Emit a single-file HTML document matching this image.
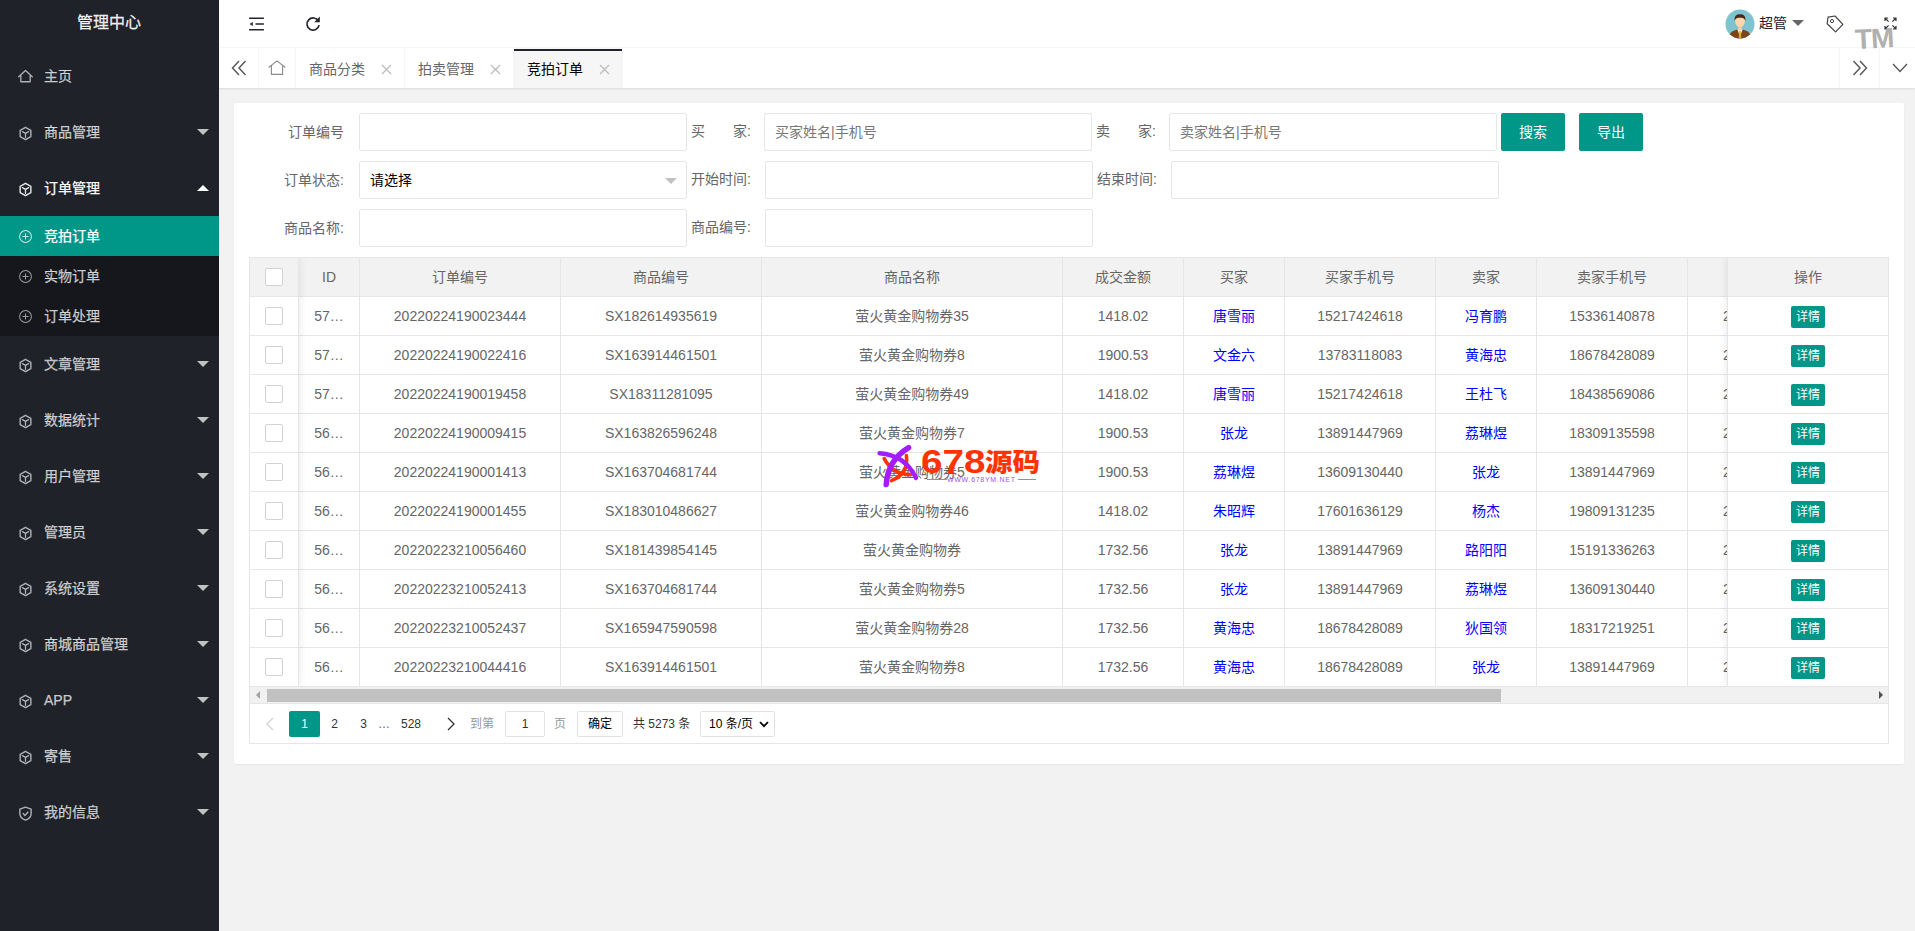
<!DOCTYPE html>
<html lang="zh-CN"><head><meta charset="utf-8"><title>管理中心</title>
<style>
*{box-sizing:border-box;margin:0;padding:0}
html,body{width:1915px;height:931px;overflow:hidden}
body{background:#f2f2f2;font-family:"Liberation Sans","Noto Sans CJK SC",sans-serif;font-size:14px;color:#666;position:relative}
.abs{position:absolute}
#side{position:absolute;left:0;top:0;width:219px;height:931px;background:#20222a;color:rgba(255,255,255,.72)}
#logo{position:absolute;left:0;top:0;width:218px;height:48px;line-height:45px;text-align:center;font-size:16px;color:rgba(255,255,255,.92);-webkit-text-stroke:.3px rgba(255,255,255,.9)}
.mi{position:absolute;left:0;width:219px;height:56px;line-height:56px}
.mi .ic{position:absolute;left:18px;top:21.5px;width:15px;height:15px;opacity:.9}
.mi span{position:absolute;left:44px;top:0;-webkit-text-stroke:.25px currentColor}
.mi.on{color:#fff}
.arr{position:absolute;left:197px;width:0;height:0;border:6px solid transparent}
.arr.down{top:25px;border-top-color:rgba(255,255,255,.72);border-bottom-width:0}
.arr.up{top:25px;border-bottom-color:#fff;border-top-width:0}
#sub{position:absolute;left:0;top:216px;width:219px;height:120px;background:#16171d}
.si{position:absolute;left:0;width:219px;height:40px;line-height:40px}
.si .ic{position:absolute;left:18px;top:13px;width:15px;height:15px;opacity:.8}
.si span{position:absolute;left:44px;-webkit-text-stroke:.25px currentColor}
.si.on{background:#009688;color:#fff}
#head{position:absolute;left:219px;top:0;width:1696px;height:48px;background:#fff;border-bottom:1px solid #f6f6f6}
#tabs{position:absolute;left:219px;top:48px;width:1696px;height:40px;background:#fff;box-shadow:0 1px 2px 0 rgba(0,0,0,.1)}
.tb{position:absolute;top:0;height:40px;border-right:1px solid #f6f6f6;line-height:40px;color:#666}
.tb.l{border-right:0;border-left:1px solid #f6f6f6}
.tab span{position:absolute;left:13px;top:1px;white-space:nowrap}
.tab.on{background:#f6f6f6;color:#000}
.tab.on:before{content:"";position:absolute;left:0;top:1px;width:108px;height:2px;background:#20222a}
.x{position:absolute;left:85px;top:16px;width:11px;height:11px}
#card{position:absolute;left:234px;top:103px;width:1670px;height:661px;background:#fff;border-radius:2px;box-shadow:0 1px 2px 0 rgba(0,0,0,.05)}
.lb{position:absolute;height:38px;line-height:38px;white-space:nowrap;color:#666}
.inp{position:absolute;height:38px;width:328px;border:1px solid #e6e6e6;border-radius:2px;background:#fff;line-height:36px;padding-left:10px;color:#777;white-space:nowrap}
.btn{position:absolute;top:113px;height:38px;width:64px;background:#009688;color:#fff;text-align:center;line-height:38px;border-radius:2px}
#tbl{position:absolute;left:249px;top:257px;width:1640px;height:487px;border:1px solid #e6e6e6;background:#fff;overflow:hidden}
.hr{position:absolute;left:0;top:0;height:39px;width:1640px;background:#f2f2f2;border-bottom:1px solid #e6e6e6}
.c{position:absolute;top:0;height:39px;line-height:38px;text-align:center;border-right:1px solid #e6e6e6;border-bottom:1px solid #e6e6e6;white-space:nowrap;overflow:hidden}
.r{position:absolute;left:0;width:1640px;height:39px}
.r .c{background:#fff}
.hr .c{background:#f2f2f2}
a{color:#00f;text-decoration:none}
.cb{position:absolute;left:15px;top:10px;width:18px;height:18px;border:1px solid #d2d2d2;border-radius:2px;background:#fff}
.det{display:inline-block;height:22px;line-height:22px;padding:0 5px;background:#009688;color:#fff;font-size:12px;border-radius:2px;vertical-align:middle;margin-top:0px}
#fl{position:absolute;left:0;top:0;width:49px;height:429px;box-shadow:1px 0 8px rgba(0,0,0,.08);border-right:1px solid #e6e6e6}
#fr{position:absolute;left:1477px;top:0;width:162px;height:429px;box-shadow:-1px 0 8px rgba(0,0,0,.08);border-left:1px solid #e6e6e6;background:#fff}
#sb{position:absolute;left:0;top:429px;width:1638px;height:16px;background:#f1f1f1}
#pg{position:absolute;left:0;top:445px;width:1638px;height:41px;border-top:1px solid #e6e6e6;font-size:12px;color:#333}
.p{position:absolute;top:7px;height:26px;line-height:26px;text-align:center;white-space:nowrap}
</style></head><body>

<div id="side"><div id="logo">管理中心</div>
<div class="mi" style="top:48px"><svg class="ic" style="top:20.5px" viewBox="0 0 16 16"><path d="M0.8 8.3 L8 1.6 L15.2 8.3 M3 6.8 V13.6 H13 V6.8" fill="none" stroke="currentColor" stroke-width="1.4" stroke-linejoin="round" stroke-linecap="round"/></svg><span>主页</span></div>
<div class="mi" style="top:104px"><svg class="ic" viewBox="0 0 16 16"><path d="M8 1.4 L13.7 4.7 V11.3 L8 14.6 L2.3 11.3 V4.7 Z" fill="none" stroke="currentColor" stroke-width="1.5" stroke-linejoin="round"/><path d="M4.7 6 L8 7.9 L11.3 6 M8 7.9 V12" fill="none" stroke="currentColor" stroke-width="1.4" stroke-linecap="round"/></svg><span>商品管理</span><i class="arr down"></i></div>
<div class="mi on" style="top:160px"><svg class="ic" viewBox="0 0 16 16"><path d="M8 1.4 L13.7 4.7 V11.3 L8 14.6 L2.3 11.3 V4.7 Z" fill="none" stroke="currentColor" stroke-width="1.5" stroke-linejoin="round"/><path d="M4.7 6 L8 7.9 L11.3 6 M8 7.9 V12" fill="none" stroke="currentColor" stroke-width="1.4" stroke-linecap="round"/></svg><span>订单管理</span><i class="arr up"></i></div>
<div class="mi" style="top:336px"><svg class="ic" viewBox="0 0 16 16"><path d="M8 1.4 L13.7 4.7 V11.3 L8 14.6 L2.3 11.3 V4.7 Z" fill="none" stroke="currentColor" stroke-width="1.5" stroke-linejoin="round"/><path d="M4.7 6 L8 7.9 L11.3 6 M8 7.9 V12" fill="none" stroke="currentColor" stroke-width="1.4" stroke-linecap="round"/></svg><span>文章管理</span><i class="arr down"></i></div>
<div class="mi" style="top:392px"><svg class="ic" viewBox="0 0 16 16"><path d="M8 1.4 L13.7 4.7 V11.3 L8 14.6 L2.3 11.3 V4.7 Z" fill="none" stroke="currentColor" stroke-width="1.5" stroke-linejoin="round"/><path d="M4.7 6 L8 7.9 L11.3 6 M8 7.9 V12" fill="none" stroke="currentColor" stroke-width="1.4" stroke-linecap="round"/></svg><span>数据统计</span><i class="arr down"></i></div>
<div class="mi" style="top:448px"><svg class="ic" viewBox="0 0 16 16"><path d="M8 1.4 L13.7 4.7 V11.3 L8 14.6 L2.3 11.3 V4.7 Z" fill="none" stroke="currentColor" stroke-width="1.5" stroke-linejoin="round"/><path d="M4.7 6 L8 7.9 L11.3 6 M8 7.9 V12" fill="none" stroke="currentColor" stroke-width="1.4" stroke-linecap="round"/></svg><span>用户管理</span><i class="arr down"></i></div>
<div class="mi" style="top:504px"><svg class="ic" viewBox="0 0 16 16"><path d="M8 1.4 L13.7 4.7 V11.3 L8 14.6 L2.3 11.3 V4.7 Z" fill="none" stroke="currentColor" stroke-width="1.5" stroke-linejoin="round"/><path d="M4.7 6 L8 7.9 L11.3 6 M8 7.9 V12" fill="none" stroke="currentColor" stroke-width="1.4" stroke-linecap="round"/></svg><span>管理员</span><i class="arr down"></i></div>
<div class="mi" style="top:560px"><svg class="ic" viewBox="0 0 16 16"><path d="M8 1.4 L13.7 4.7 V11.3 L8 14.6 L2.3 11.3 V4.7 Z" fill="none" stroke="currentColor" stroke-width="1.5" stroke-linejoin="round"/><path d="M4.7 6 L8 7.9 L11.3 6 M8 7.9 V12" fill="none" stroke="currentColor" stroke-width="1.4" stroke-linecap="round"/></svg><span>系统设置</span><i class="arr down"></i></div>
<div class="mi" style="top:616px"><svg class="ic" viewBox="0 0 16 16"><path d="M8 1.4 L13.7 4.7 V11.3 L8 14.6 L2.3 11.3 V4.7 Z" fill="none" stroke="currentColor" stroke-width="1.5" stroke-linejoin="round"/><path d="M4.7 6 L8 7.9 L11.3 6 M8 7.9 V12" fill="none" stroke="currentColor" stroke-width="1.4" stroke-linecap="round"/></svg><span>商城商品管理</span><i class="arr down"></i></div>
<div class="mi" style="top:672px"><svg class="ic" viewBox="0 0 16 16"><path d="M8 1.4 L13.7 4.7 V11.3 L8 14.6 L2.3 11.3 V4.7 Z" fill="none" stroke="currentColor" stroke-width="1.5" stroke-linejoin="round"/><path d="M4.7 6 L8 7.9 L11.3 6 M8 7.9 V12" fill="none" stroke="currentColor" stroke-width="1.4" stroke-linecap="round"/></svg><span>APP</span><i class="arr down"></i></div>
<div class="mi" style="top:728px"><svg class="ic" viewBox="0 0 16 16"><path d="M8 1.4 L13.7 4.7 V11.3 L8 14.6 L2.3 11.3 V4.7 Z" fill="none" stroke="currentColor" stroke-width="1.5" stroke-linejoin="round"/><path d="M4.7 6 L8 7.9 L11.3 6 M8 7.9 V12" fill="none" stroke="currentColor" stroke-width="1.4" stroke-linecap="round"/></svg><span>寄售</span><i class="arr down"></i></div>
<div class="mi" style="top:784px"><svg class="ic" viewBox="0 0 16 16"><path d="M8 1.2 L14 3.3 V8.2 C14 11.6 11.2 13.8 8 15 C4.8 13.8 2 11.6 2 8.2 V3.3 Z" fill="none" stroke="currentColor" stroke-width="1.5" stroke-linejoin="round"/><path d="M5.2 7.8 L7.4 10 L11 6.2" fill="none" stroke="currentColor" stroke-width="1.5"/></svg><span>我的信息</span><i class="arr down"></i></div>
<div id="sub">
<div class="si on" style="top:0px"><svg class="ic" viewBox="0 0 16 16"><circle cx="8" cy="8" r="6.3" fill="none" stroke="currentColor" stroke-width="1.1"/><path d="M8 4.8 V11.2 M4.8 8 H11.2" stroke="currentColor" stroke-width="1.1" fill="none"/></svg><span>竞拍订单</span></div>
<div class="si" style="top:40px"><svg class="ic" viewBox="0 0 16 16"><circle cx="8" cy="8" r="6.3" fill="none" stroke="currentColor" stroke-width="1.1"/><path d="M8 4.8 V11.2 M4.8 8 H11.2" stroke="currentColor" stroke-width="1.1" fill="none"/></svg><span>实物订单</span></div>
<div class="si" style="top:80px"><svg class="ic" viewBox="0 0 16 16"><circle cx="8" cy="8" r="6.3" fill="none" stroke="currentColor" stroke-width="1.1"/><path d="M8 4.8 V11.2 M4.8 8 H11.2" stroke="currentColor" stroke-width="1.1" fill="none"/></svg><span>订单处理</span></div>
</div></div>
<div id="head">
<svg class="abs" style="left:29px;top:16px;width:17px;height:16px" viewBox="0 0 17 16"><path d="M1.6 2.3 H15.4 M8 8 H15.4 M1.6 13.7 H15.4" stroke="#23242c" stroke-width="1.4" stroke-linecap="round" fill="none"/><path d="M1.6 8 L4.8 6 V10 Z" fill="#23242c"/></svg>
<svg class="abs" style="left:85px;top:15px;width:18px;height:18px" viewBox="0 0 18 18"><path d="M14.4 6.0 A6.1 6.1 0 1 0 15.1 10.2" stroke="#23242c" stroke-width="1.7" fill="none"/><path d="M10.2 7.2 H15.8 V1.6 Z" fill="#23242c"/></svg>
<svg class="abs" style="left:1506px;top:9px;width:30px;height:30px" viewBox="0 0 30 30"><defs><clipPath id="av"><circle cx="15" cy="15" r="14.5"/></clipPath></defs><circle cx="15" cy="15" r="14.5" fill="#7ec3cf"/><g clip-path="url(#av)"><path d="M3 30 C4 23 9 21.5 12 20.5 L15 24 L18 20.5 C21 21.5 26 23 27 30 Z" fill="#7a4518"/><path d="M12.6 20 L15 29 L17.4 20 Z" fill="#fff"/><path d="M14.3 21.5 H15.7 L16.2 28.5 L15 30 L13.8 28.5 Z" fill="#e9a827"/><rect x="13.2" y="16" width="3.6" height="5" fill="#f3c9a0"/><ellipse cx="15" cy="12.3" rx="4.9" ry="5.8" fill="#fbd5ae"/><path d="M9.6 12.5 C9 7 11.5 5.2 15 5.2 C18.5 5.2 21 7 20.4 12.5 C20 10 19 8.8 15 8.8 C11 8.8 10 10 9.6 12.5 Z" fill="#4a2a12"/></g></svg>
<span class="abs" style="left:1540px;top:0;line-height:47px;color:#222;white-space:nowrap">超管</span>
<i class="abs" style="left:1573px;top:20px;width:0;height:0;border:6px solid transparent;border-top-color:#666;border-bottom-width:0"></i>
<svg class="abs" style="left:1606px;top:14px;width:20px;height:20px" viewBox="0 0 20 20"><path d="M3 3.2 L10 2 L17.9 10.4 L10.6 17.9 L2.2 9.8 Z" fill="none" stroke="#444" stroke-width="1.2" stroke-linejoin="round"/><circle cx="7" cy="7.1" r="1.6" fill="none" stroke="#444" stroke-width="1"/></svg>
<svg class="abs" style="left:1665px;top:17px;width:13px;height:13px" viewBox="0 0 13 13"><path d="M1 4 V1 H4 M1 1 L4.6 4.6 M9 1 H12 V4 M12 1 L8.4 4.6 M1 9 V12 H4 M1 12 L4.6 8.4 M12 9 V12 H9 M12 12 L8.4 8.4" stroke="#333" stroke-width="1.2" fill="none"/></svg>
<span class="abs" style="left:1636px;top:24px;font-size:28px;line-height:30px;font-weight:bold;color:#b0b0b0;transform:rotate(-3deg);letter-spacing:-1px;z-index:5">TM</span>
</div>
<div id="tabs">
<div class="tb" style="left:0;width:40px"><svg class="abs" style="left:12px;top:12px;width:16px;height:16px" viewBox="0 0 16 16"><path d="M8 1 L1.5 8 L8 15 M14.5 1 L8 8 L14.5 15" stroke="#555" stroke-width="1.4" fill="none"/></svg></div>
<div class="tb" style="left:40px;width:37px"><svg class="abs" style="left:9px;top:12px;width:18px;height:16px" viewBox="0 0 18 16"><path d="M1 7.2 L9 0.9 L17 7.2 M3.4 5.8 V14.4 H14.6 V5.8" stroke="#8a8a8a" stroke-width="1.1" fill="none" stroke-linecap="round"/></svg></div>
<div class="tb tab" style="left:77px;width:109px"><span>商品分类</span><svg class="x" viewBox="0 0 11 11"><path d="M1 1 L10 10 M10 1 L1 10" stroke="#bdbdbd" stroke-width="1.3" fill="none"/></svg></div>
<div class="tb tab" style="left:186px;width:109px"><span>拍卖管理</span><svg class="x" viewBox="0 0 11 11"><path d="M1 1 L10 10 M10 1 L1 10" stroke="#bdbdbd" stroke-width="1.3" fill="none"/></svg></div>
<div class="tb tab on" style="left:295px;width:109px"><span>竞拍订单</span><svg class="x" viewBox="0 0 11 11"><path d="M1 1 L10 10 M10 1 L1 10" stroke="#bdbdbd" stroke-width="1.3" fill="none"/></svg></div>
<div class="tb l" style="left:1620px;width:40px"><svg class="abs" style="left:12px;top:12px;width:16px;height:16px" viewBox="0 0 16 16"><path d="M1.5 1 L8 8 L1.5 15 M8 1 L14.5 8 L8 15" stroke="#555" stroke-width="1.4" fill="none"/></svg></div>
<div class="tb l" style="left:1660px;width:40px"><svg class="abs" style="left:12px;top:15px;width:16px;height:10px" viewBox="0 0 16 10"><path d="M1 1 L8 8.5 L15 1" stroke="#555" stroke-width="1.3" fill="none"/></svg></div>
</div>
<div id="card"></div>
<div class="lb" style="right:1571px;top:113px;text-align:right">订单编号</div>
<div class="inp" style="left:359px;top:113px;width:328px;"></div>
<div class="lb" style="left:691px;top:112px">买&emsp;&emsp;家:</div>
<div class="inp" style="left:764px;top:113px;width:328px;">买家姓名|手机号</div>
<div class="lb" style="left:1096px;top:112px">卖&emsp;&emsp;家:</div>
<div class="inp" style="left:1169px;top:113px;width:328px;">卖家姓名|手机号</div>
<div class="btn" style="left:1501px">搜索</div><div class="btn" style="left:1579px">导出</div>
<div class="lb" style="right:1571px;top:161px;text-align:right">订单状态:</div>
<div class="inp" style="left:359px;top:161px;width:328px;color:#000">请选择</div>
<i class="abs" style="left:665px;top:178px;width:0;height:0;border:6px solid transparent;border-top-color:#c2c2c2;border-bottom-width:0"></i>
<div class="lb" style="left:691px;top:160px">开始时间:</div>
<div class="inp" style="left:765px;top:161px;width:328px;"></div>
<div class="lb" style="left:1097px;top:160px">结束时间:</div>
<div class="inp" style="left:1171px;top:161px;width:328px;"></div>
<div class="lb" style="right:1571px;top:209px;text-align:right">商品名称:</div>
<div class="inp" style="left:359px;top:209px;width:328px;"></div>
<div class="lb" style="left:691px;top:208px">商品编号:</div>
<div class="inp" style="left:765px;top:209px;width:328px;"></div>
<div id="tbl">
<div class="hr"><div class="c" style="left:49px;width:61px;">ID</div><div class="c" style="left:110px;width:201px;">订单编号</div><div class="c" style="left:311px;width:201px;">商品编号</div><div class="c" style="left:512px;width:301px;">商品名称</div><div class="c" style="left:813px;width:121px;">成交金额</div><div class="c" style="left:934px;width:101px;">买家</div><div class="c" style="left:1035px;width:151px;">买家手机号</div><div class="c" style="left:1186px;width:101px;">卖家</div><div class="c" style="left:1287px;width:151px;">卖家手机号</div><div class="c" style="left:1438px;width:201px;text-align:left;padding-left:35px;"></div></div>
<div class="r" style="top:39px"><div class="c" style="left:49px;width:61px;">57…</div><div class="c" style="left:110px;width:201px;">20220224190023444</div><div class="c" style="left:311px;width:201px;">SX182614935619</div><div class="c" style="left:512px;width:301px;">萤火黄金购物券35</div><div class="c" style="left:813px;width:121px;">1418.02</div><div class="c" style="left:934px;width:101px;"><a>唐雪丽</a></div><div class="c" style="left:1035px;width:151px;">15217424618</div><div class="c" style="left:1186px;width:101px;"><a>冯育鹏</a></div><div class="c" style="left:1287px;width:151px;">15336140878</div><div class="c" style="left:1438px;width:201px;text-align:left;padding-left:35px;">2022-02-24 19:00:23</div></div>
<div class="r" style="top:78px"><div class="c" style="left:49px;width:61px;">57…</div><div class="c" style="left:110px;width:201px;">20220224190022416</div><div class="c" style="left:311px;width:201px;">SX163914461501</div><div class="c" style="left:512px;width:301px;">萤火黄金购物券8</div><div class="c" style="left:813px;width:121px;">1900.53</div><div class="c" style="left:934px;width:101px;"><a>文金六</a></div><div class="c" style="left:1035px;width:151px;">13783118083</div><div class="c" style="left:1186px;width:101px;"><a>黄海忠</a></div><div class="c" style="left:1287px;width:151px;">18678428089</div><div class="c" style="left:1438px;width:201px;text-align:left;padding-left:35px;">2022-02-24 19:00:22</div></div>
<div class="r" style="top:117px"><div class="c" style="left:49px;width:61px;">57…</div><div class="c" style="left:110px;width:201px;">20220224190019458</div><div class="c" style="left:311px;width:201px;">SX18311281095</div><div class="c" style="left:512px;width:301px;">萤火黄金购物券49</div><div class="c" style="left:813px;width:121px;">1418.02</div><div class="c" style="left:934px;width:101px;"><a>唐雪丽</a></div><div class="c" style="left:1035px;width:151px;">15217424618</div><div class="c" style="left:1186px;width:101px;"><a>王杜飞</a></div><div class="c" style="left:1287px;width:151px;">18438569086</div><div class="c" style="left:1438px;width:201px;text-align:left;padding-left:35px;">2022-02-24 19:00:19</div></div>
<div class="r" style="top:156px"><div class="c" style="left:49px;width:61px;">56…</div><div class="c" style="left:110px;width:201px;">20220224190009415</div><div class="c" style="left:311px;width:201px;">SX163826596248</div><div class="c" style="left:512px;width:301px;">萤火黄金购物券7</div><div class="c" style="left:813px;width:121px;">1900.53</div><div class="c" style="left:934px;width:101px;"><a>张龙</a></div><div class="c" style="left:1035px;width:151px;">13891447969</div><div class="c" style="left:1186px;width:101px;"><a>荔琳煜</a></div><div class="c" style="left:1287px;width:151px;">18309135598</div><div class="c" style="left:1438px;width:201px;text-align:left;padding-left:35px;">2022-02-24 19:00:09</div></div>
<div class="r" style="top:195px"><div class="c" style="left:49px;width:61px;">56…</div><div class="c" style="left:110px;width:201px;">20220224190001413</div><div class="c" style="left:311px;width:201px;">SX163704681744</div><div class="c" style="left:512px;width:301px;">萤火黄金购物券5</div><div class="c" style="left:813px;width:121px;">1900.53</div><div class="c" style="left:934px;width:101px;"><a>荔琳煜</a></div><div class="c" style="left:1035px;width:151px;">13609130440</div><div class="c" style="left:1186px;width:101px;"><a>张龙</a></div><div class="c" style="left:1287px;width:151px;">13891447969</div><div class="c" style="left:1438px;width:201px;text-align:left;padding-left:35px;">2022-02-24 19:00:01</div></div>
<div class="r" style="top:234px"><div class="c" style="left:49px;width:61px;">56…</div><div class="c" style="left:110px;width:201px;">20220224190001455</div><div class="c" style="left:311px;width:201px;">SX183010486627</div><div class="c" style="left:512px;width:301px;">萤火黄金购物券46</div><div class="c" style="left:813px;width:121px;">1418.02</div><div class="c" style="left:934px;width:101px;"><a>朱昭辉</a></div><div class="c" style="left:1035px;width:151px;">17601636129</div><div class="c" style="left:1186px;width:101px;"><a>杨杰</a></div><div class="c" style="left:1287px;width:151px;">19809131235</div><div class="c" style="left:1438px;width:201px;text-align:left;padding-left:35px;">2022-02-24 19:00:01</div></div>
<div class="r" style="top:273px"><div class="c" style="left:49px;width:61px;">56…</div><div class="c" style="left:110px;width:201px;">20220223210056460</div><div class="c" style="left:311px;width:201px;">SX181439854145</div><div class="c" style="left:512px;width:301px;">萤火黄金购物券</div><div class="c" style="left:813px;width:121px;">1732.56</div><div class="c" style="left:934px;width:101px;"><a>张龙</a></div><div class="c" style="left:1035px;width:151px;">13891447969</div><div class="c" style="left:1186px;width:101px;"><a>路阳阳</a></div><div class="c" style="left:1287px;width:151px;">15191336263</div><div class="c" style="left:1438px;width:201px;text-align:left;padding-left:35px;">2022-02-23 21:00:56</div></div>
<div class="r" style="top:312px"><div class="c" style="left:49px;width:61px;">56…</div><div class="c" style="left:110px;width:201px;">20220223210052413</div><div class="c" style="left:311px;width:201px;">SX163704681744</div><div class="c" style="left:512px;width:301px;">萤火黄金购物券5</div><div class="c" style="left:813px;width:121px;">1732.56</div><div class="c" style="left:934px;width:101px;"><a>张龙</a></div><div class="c" style="left:1035px;width:151px;">13891447969</div><div class="c" style="left:1186px;width:101px;"><a>荔琳煜</a></div><div class="c" style="left:1287px;width:151px;">13609130440</div><div class="c" style="left:1438px;width:201px;text-align:left;padding-left:35px;">2022-02-23 21:00:52</div></div>
<div class="r" style="top:351px"><div class="c" style="left:49px;width:61px;">56…</div><div class="c" style="left:110px;width:201px;">20220223210052437</div><div class="c" style="left:311px;width:201px;">SX165947590598</div><div class="c" style="left:512px;width:301px;">萤火黄金购物券28</div><div class="c" style="left:813px;width:121px;">1732.56</div><div class="c" style="left:934px;width:101px;"><a>黄海忠</a></div><div class="c" style="left:1035px;width:151px;">18678428089</div><div class="c" style="left:1186px;width:101px;"><a>狄国领</a></div><div class="c" style="left:1287px;width:151px;">18317219251</div><div class="c" style="left:1438px;width:201px;text-align:left;padding-left:35px;">2022-02-23 21:00:52</div></div>
<div class="r" style="top:390px"><div class="c" style="left:49px;width:61px;">56…</div><div class="c" style="left:110px;width:201px;">20220223210044416</div><div class="c" style="left:311px;width:201px;">SX163914461501</div><div class="c" style="left:512px;width:301px;">萤火黄金购物券8</div><div class="c" style="left:813px;width:121px;">1732.56</div><div class="c" style="left:934px;width:101px;"><a>黄海忠</a></div><div class="c" style="left:1035px;width:151px;">18678428089</div><div class="c" style="left:1186px;width:101px;"><a>张龙</a></div><div class="c" style="left:1287px;width:151px;">13891447969</div><div class="c" style="left:1438px;width:201px;text-align:left;padding-left:35px;">2022-02-23 21:00:44</div></div>
<div id="fl">
<div class="c" style="left:0;width:49px;background:#f2f2f2"><i class="cb"></i></div>
<div class="c" style="left:0;top:39px;width:49px;background:#fff"><i class="cb"></i></div>
<div class="c" style="left:0;top:78px;width:49px;background:#fff"><i class="cb"></i></div>
<div class="c" style="left:0;top:117px;width:49px;background:#fff"><i class="cb"></i></div>
<div class="c" style="left:0;top:156px;width:49px;background:#fff"><i class="cb"></i></div>
<div class="c" style="left:0;top:195px;width:49px;background:#fff"><i class="cb"></i></div>
<div class="c" style="left:0;top:234px;width:49px;background:#fff"><i class="cb"></i></div>
<div class="c" style="left:0;top:273px;width:49px;background:#fff"><i class="cb"></i></div>
<div class="c" style="left:0;top:312px;width:49px;background:#fff"><i class="cb"></i></div>
<div class="c" style="left:0;top:351px;width:49px;background:#fff"><i class="cb"></i></div>
<div class="c" style="left:0;top:390px;width:49px;background:#fff"><i class="cb"></i></div>
</div>
<div id="fr">
<div class="c" style="left:0;width:161px;background:#f2f2f2">操作</div>
<div class="c" style="left:0;top:39px;width:161px;background:#fff"><span class="det">详情</span></div>
<div class="c" style="left:0;top:78px;width:161px;background:#fff"><span class="det">详情</span></div>
<div class="c" style="left:0;top:117px;width:161px;background:#fff"><span class="det">详情</span></div>
<div class="c" style="left:0;top:156px;width:161px;background:#fff"><span class="det">详情</span></div>
<div class="c" style="left:0;top:195px;width:161px;background:#fff"><span class="det">详情</span></div>
<div class="c" style="left:0;top:234px;width:161px;background:#fff"><span class="det">详情</span></div>
<div class="c" style="left:0;top:273px;width:161px;background:#fff"><span class="det">详情</span></div>
<div class="c" style="left:0;top:312px;width:161px;background:#fff"><span class="det">详情</span></div>
<div class="c" style="left:0;top:351px;width:161px;background:#fff"><span class="det">详情</span></div>
<div class="c" style="left:0;top:390px;width:161px;background:#fff"><span class="det">详情</span></div>
</div>
<div id="sb"><i class="abs" style="left:6px;top:4px;width:0;height:0;border:4px solid transparent;border-right-color:#a3a3a3;border-left-width:0"></i><i class="abs" style="left:17px;top:2px;width:1234px;height:13px;background:#c1c1c1;margin-top:-0.5px"></i><i class="abs" style="left:1629px;top:4px;width:0;height:0;border:4px solid transparent;border-left-color:#505050;border-right-width:0"></i></div>
<div id="pg">
<svg class="abs" style="left:16px;top:13px;width:8px;height:14px" viewBox="0 0 8 14"><path d="M7 1 L1 7 L7 13" stroke="#d2d2d2" stroke-width="1.3" fill="none"/></svg>
<div class="p" style="left:39px;width:31px;background:#009688;color:#fff;border-radius:2px">1</div>
<div class="p" style="left:70px;width:29px">2</div>
<div class="p" style="left:99px;width:29px">3</div>
<div class="p" style="left:124px;width:20px;color:#666">…</div>
<div class="p" style="left:146px;width:30px">528</div>
<svg class="abs" style="left:197px;top:13px;width:8px;height:14px" viewBox="0 0 8 14"><path d="M1 1 L7 7 L1 13" stroke="#333" stroke-width="1.3" fill="none"/></svg>
<div class="p" style="left:220px;color:#999">到第</div>
<div class="p" style="left:255px;width:40px;border:1px solid #e2e2e2;border-radius:2px;line-height:24px">1</div>
<div class="p" style="left:304px;color:#999">页</div>
<div class="p" style="left:327px;width:46px;border:1px solid #e2e2e2;border-radius:2px;line-height:24px;color:#000">确定</div>
<div class="p" style="left:383px">共 5273 条</div>
<div class="p" style="left:450px;width:75px;border:1px solid #e2e2e2;border-radius:2px;line-height:24px;text-align:left;padding-left:8px;color:#000">10 条/页<svg class="abs" style="left:58px;top:9px;width:10px;height:7px" viewBox="0 0 10 7"><path d="M1 1 L5 5.2 L9 1" stroke="#000" stroke-width="1.8" fill="none"/></svg></div>
</div>
</div>
<div class="abs" style="left:870px;top:438px;width:180px;height:56px;z-index:9">
<svg class="abs" style="left:0;top:0;width:60px;height:56px" viewBox="0 0 60 56"><path d="M14.2 20.6 Q22.4 36.2 40.2 36.6" fill="none" stroke="#ff3300" stroke-width="3.6" stroke-linecap="round"/><path d="M36.4 17.6 Q38.7 36.0 21.4 42.6" fill="none" stroke="#ff3300" stroke-width="3.6" stroke-linecap="round"/><path d="M38.6 9.6 Q17.7 22.2 16.2 46.6" fill="none" stroke="#a41cff" stroke-width="5.5" stroke-linecap="round"/><path d="M9.6 15.2 Q35.3 17.1 46.0 40.0" fill="none" stroke="#a41cff" stroke-width="4.4" stroke-linecap="round"/></svg>
<span class="abs" style="left:51px;top:6px;font-size:33px;line-height:36px;font-weight:bold;color:#ff3300;white-space:nowrap;transform:scaleX(1.17);transform-origin:0 0">678</span>
<span class="abs" style="left:115px;top:4px;font-size:25px;line-height:36px;font-weight:900;color:#ff3300;white-space:nowrap;transform:scaleX(1.1);transform-origin:0 0;font-family:'Noto Sans CJK SC',sans-serif">源码</span>
<i class="abs" style="left:57px;top:41px;width:20px;height:1px;background:#b46cf5"></i>
<span class="abs" style="left:77px;top:36px;font-size:7px;line-height:11px;color:#a84cf0;white-space:nowrap;letter-spacing:.7px">WWW.678YM.NET</span>
<i class="abs" style="left:148px;top:41px;width:18px;height:1px;background:#b46cf5"></i>
</div>
</body></html>
